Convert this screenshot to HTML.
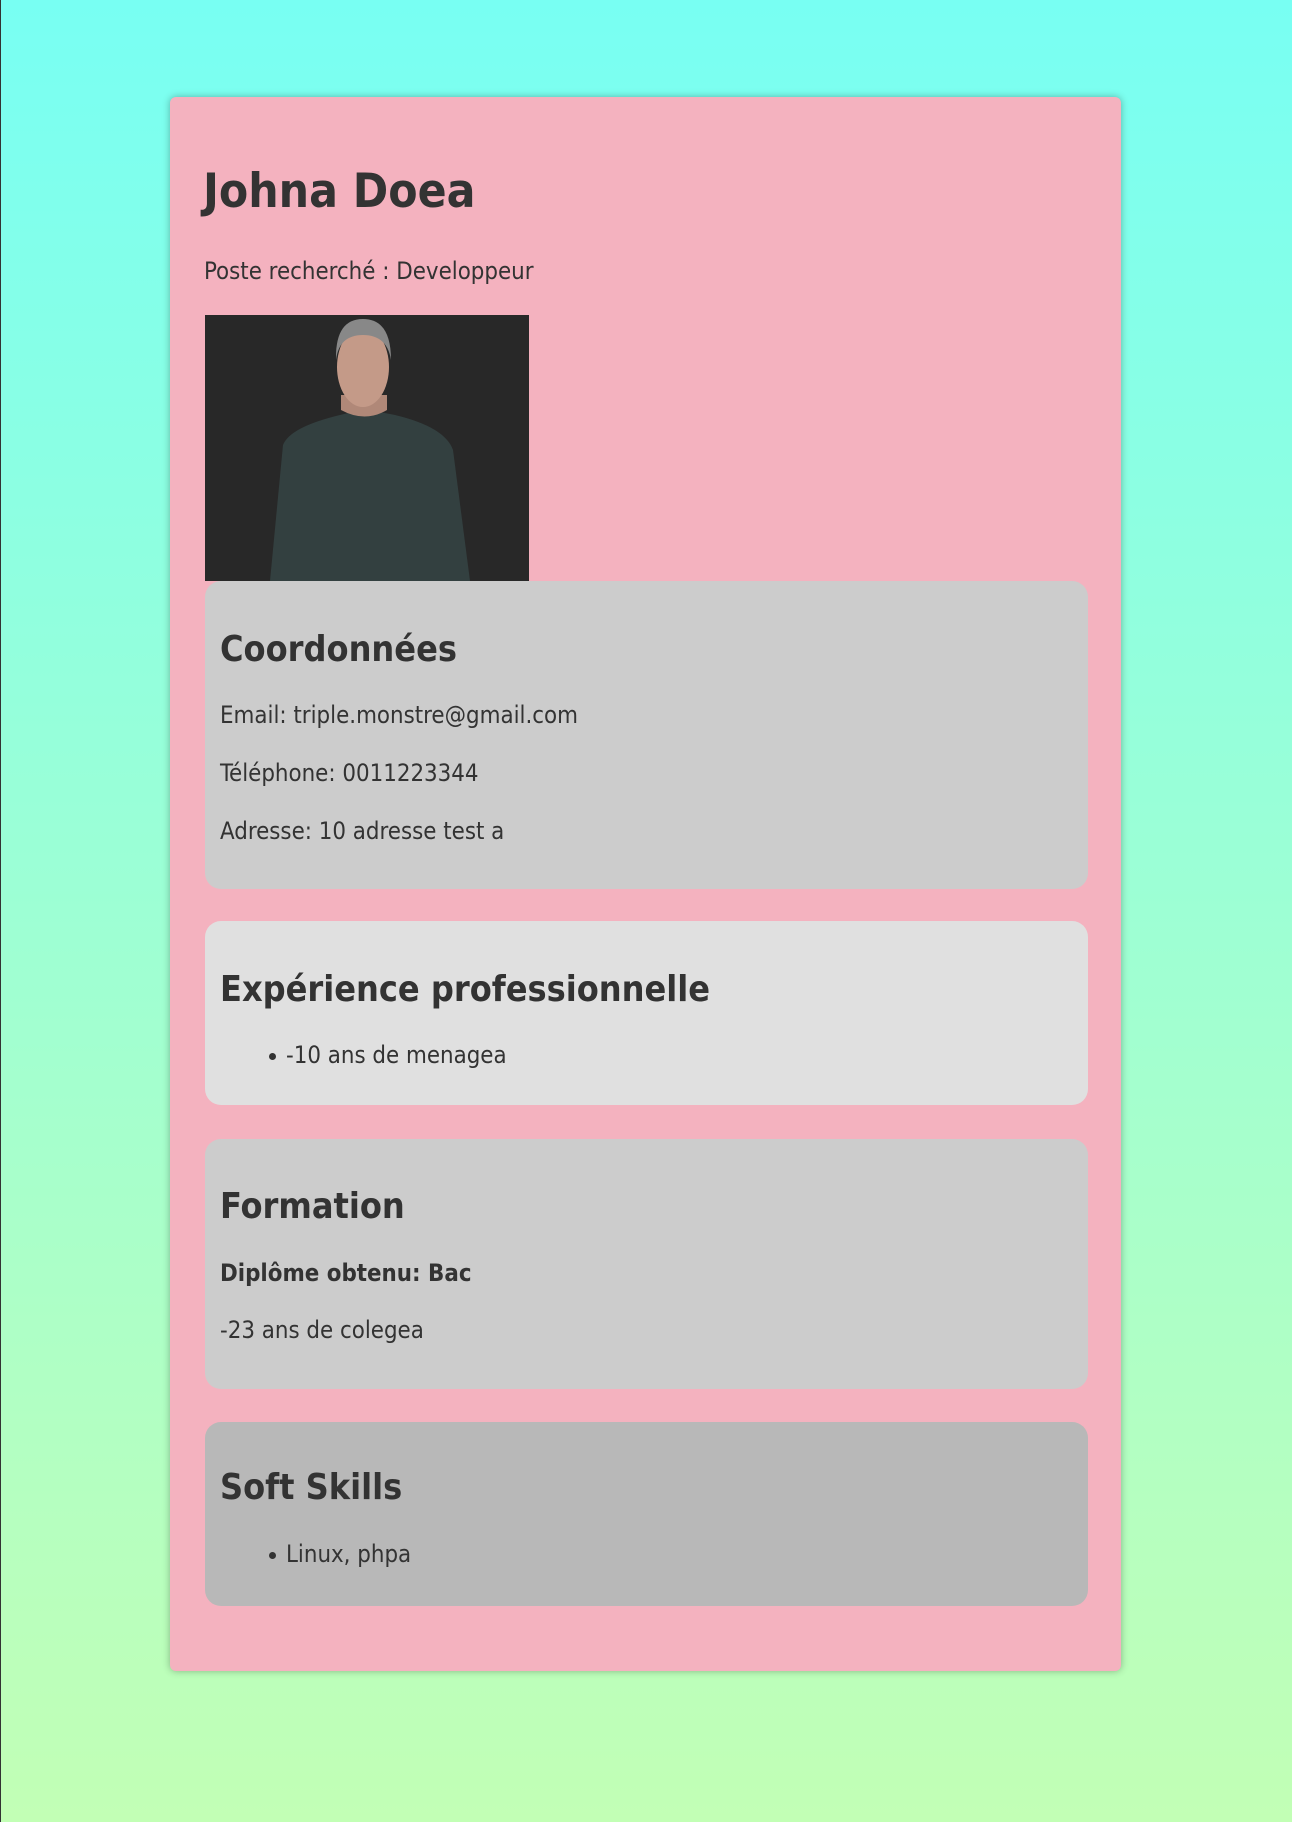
<!DOCTYPE html>
<html><head><meta charset="utf-8"><style>
*{box-sizing:border-box}
html,body{margin:0;padding:0}
body{width:1292px;height:1822px;position:relative;overflow:hidden;
background:linear-gradient(to bottom,#78fff3 0%,#c2ffb5 100%);
font-family:"DejaVu Sans Condensed","DejaVu Sans","Liberation Sans",sans-serif;font-stretch:condensed;color:#333;border-left:1px solid #333}
.card{position:absolute;left:169px;top:97px;width:951px;height:1574px;background:#f4b2bf;border-radius:6px;
box-shadow:0 0 8px rgba(0,0,0,.3)}
h1{position:absolute;margin:0;left:33px;top:66px;font-size:47.5px;line-height:58px;font-weight:bold}
.sec{position:absolute;left:35px;width:883px;border-radius:16px}
h2{position:absolute;margin:0;left:15px;font-size:35.7px;line-height:42px;font-weight:bold}
.t{position:absolute;left:15px;font-size:23.8px;line-height:28px;white-space:nowrap}
.li{left:81px}
.li:before{content:"";position:absolute;left:-17px;top:12px;width:7px;height:7px;border-radius:50%;background:#333}
</style></head><body>
<div class="card">
<h1>Johna Doea</h1>
<div class="t" style="left:34px;top:160px">Poste recherché : Developpeur</div>
<svg style="position:absolute;left:35px;top:218px" width="324" height="266" viewBox="0 0 324 266">
<rect width="324" height="266" fill="#282828"/>
<path d="M65 266 L78 130 Q85 112 135 100 L160 94 L190 100 Q240 112 248 135 L265 266 Z" fill="#334040"/>
<path d="M136 95 Q160 108 182 95 L182 80 L136 80 Z" fill="#b08878"/>
<ellipse cx="158" cy="52" rx="26" ry="40" fill="#c49a88"/>
<path d="M131 45 Q130 4 158 4 Q186 4 186 45 Q182 20 158 20 Q134 20 131 45Z" fill="#888"/>
</svg>
<div class="sec" style="top:484px;height:308px;background:#cccccc">
<h2 style="top:48px">Coordonnées</h2>
<div class="t" style="top:120px">Email: triple.monstre@gmail.com</div>
<div class="t" style="top:178px">Téléphone: 0011223344</div>
<div class="t" style="top:236px">Adresse: 10 adresse test a</div>
</div>
<div class="sec" style="top:824px;height:184px;background:#e0e0e0">
<h2 style="top:48px">Expérience professionnelle</h2>
<div class="t li" style="top:120px">-10 ans de menagea</div>
</div>
<div class="sec" style="top:1042px;height:250px;background:#cccccc">
<h2 style="top:47px">Formation</h2>
<div class="t" style="top:120px;font-weight:bold">Diplôme obtenu: Bac</div>
<div class="t" style="top:177px">-23 ans de colegea</div>
</div>
<div class="sec" style="top:1325px;height:184px;background:#b8b8b8">
<h2 style="top:45px">Soft Skills</h2>
<div class="t li" style="top:118px">Linux, phpa</div>
</div>
</div>
</body></html>
